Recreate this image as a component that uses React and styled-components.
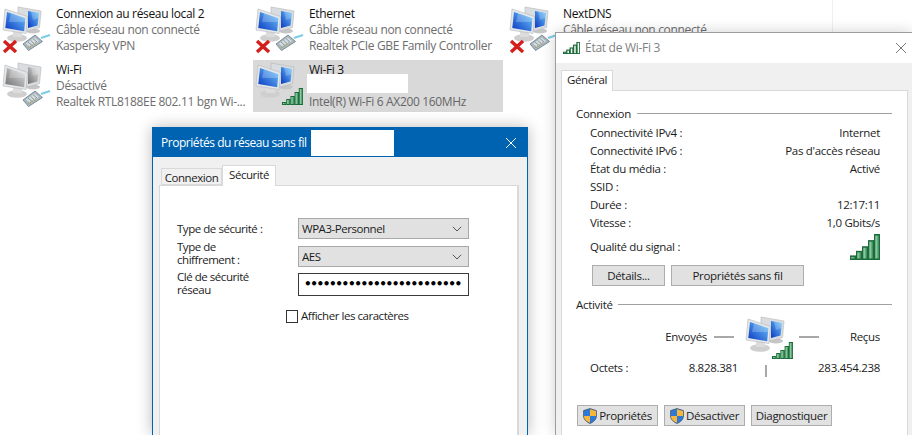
import React from 'react';
import styled, { createGlobalStyle } from 'styled-components';

const Global = createGlobalStyle`
  html, body { margin: 0; padding: 0; background: #fff; overflow: hidden; }
  * { box-sizing: border-box; }
`;

const Screen = styled.div`
  position: relative;
  width: 912px;
  height: 435px;
  overflow: hidden;
  background: #fff;
  font-family: "Open Sans", "Noto Sans", sans-serif;
  font-size: 12px;
  line-height: 16px;
  letter-spacing: -0.33px;
  color: #1c1c1c;
`;

/* ---------- adapter list ---------- */
const List = styled.div`
  display: grid;
  grid-template-columns: 253px 254px 1fr;
  grid-auto-rows: 52px;
  row-gap: 4px;
  width: 833px;
  height: 115px;
  padding-top: 4px;
  border-right: 1px solid #f0f0f0;
`;
const Item = styled.div`
  display: flex;
  width: 250px;
  background: ${p => (p.$selected ? '#d9d9d9' : 'transparent')};
`;
const ItemText = styled.div`
  position: relative;
  padding: 2px 0 0 4px;
  white-space: nowrap;
`;
const ItemName = styled.div`color: #111;`;
const ItemSub = styled.div`color: ${p => (p.$dark ? '#666' : '#6d6d6d')};`;
const Redact = styled.div`
  position: absolute;
  left: ${p => p.$left}px;
  top: ${p => p.$top}px;
  width: ${p => p.$w}px;
  height: ${p => p.$h}px;
  background: #fff;
`;

/* ---------- shared window parts ---------- */
const Win = styled.section`
  position: absolute;
  left: ${p => p.$left}px;
  top: ${p => p.$top}px;
  width: ${p => p.$w}px;
  height: ${p => p.$h}px;
  display: flex;
  flex-direction: column;
  background: #f0f0f0;
`;
const TabRow = styled.div`
  display: flex;
  align-items: flex-end;
  padding-left: ${p => p.$pad}px;
  position: relative;
  z-index: 1;
`;
const Tab = styled.div`
  width: ${p => p.$w}px;
  height: ${p => (p.$active ? 21 : 17)}px;
  margin-bottom: ${p => (p.$active ? -1 : 0)}px;
  border: 1px solid #d9d9d9;
  border-bottom: ${p => (p.$active ? 'none' : '1px solid #d9d9d9')};
  background: ${p => (p.$active ? '#fff' : '#f0f0f0')};
  text-align: center;
  line-height: ${p => (p.$active ? 18 : 17)}px;
`;
const Button = styled.button`
  display: flex;
  align-items: center;
  justify-content: center;
  gap: 2px;
  width: ${p => p.$w}px;
  height: 21px;
  padding: 0;
  background: #e1e1e1;
  border: 1px solid #adadad;
  font: inherit;
  letter-spacing: inherit;
  color: inherit;
`;

/* ---------- status window ---------- */
const StatusWin = styled(Win)`
  border-left: 1px solid #9c9c9c;
  border-top: 1px solid #9c9c9c;
  box-shadow: 0 0 14px rgba(0, 0, 0, 0.18);
  z-index: 3;
  font-size: 11.5px;
  letter-spacing: -0.3px;
`;
const StatusTitle = styled.header`
  flex: none;
  display: flex;
  align-items: center;
  height: 30px;
  padding: 0 5px 0 7px;
  background: #fff;
  color: #7f7f7f;
  gap: 5px;
  font-size: 12px;
  letter-spacing: -0.28px;
`;
const TitleGrow = styled.span`flex: 1;`;
const StatusBody = styled.div`
  flex: 1;
  min-height: 0;
  display: flex;
  flex-direction: column;
  padding: 7px 4px 0 5px;
`;
const StatusPanel = styled.div`
  flex: 1;
  background: #fff;
  border: 1px solid #d9d9d9;
  border-bottom: none;
  padding: 15px 15px 0 14px;
`;
const Heading = styled.div`
  display: flex;
  align-items: center;
  height: 16px;
  margin-top: ${p => p.$mt || 0}px;
`;
const HeadingLabel = styled.span`
  flex: none;
  width: ${p => p.$w}px;
`;
const HeadingRule = styled.span`
  flex: 1;
  height: 1px;
  margin-top: -2px;
  background: #a0a0a0;
`;
const InfoRows = styled.div`
  margin-top: 2px;
  padding: 0 12px 0 14px;
`;
const InfoRow = styled.div`
  display: flex;
  justify-content: space-between;
  align-items: center;
  height: ${p => p.$h || 18}px;
`;
const ButtonRow = styled.div`
  display: flex;
  gap: ${p => p.$gap}px;
  margin: ${p => p.$mt}px 0 0 ${p => p.$ml}px;
`;
const TrafficRow = styled.div`
  display: grid;
  grid-template-columns: 138px 20px 65px 20px 61px;
  align-items: center;
  height: 47px;
`;
const TrafficLabel = styled.span`
  text-align: right;
  padding-right: ${p => p.$pr || 0}px;
  margin-bottom: 3px;
`;
const Dash = styled.span`
  height: 2px;
  margin-bottom: 4px;
  background: #a8a8a8;
`;
const TrafficIcon = styled.div`
  padding-left: 9px;
  align-self: start;
  margin-top: 1px;
`;
const OctetRow = styled.div`
  display: grid;
  grid-template-columns: 60px 88px 27px 2px 113px;
  height: 17px;
  padding-left: 14px;
`;
const Right = styled.span`text-align: right;`;
const Tick = styled.span`
  grid-column: 4;
  align-self: end;
  height: 12px;
  background: #a8a8a8;
`;

/* ---------- properties dialog ---------- */
const DialogWin = styled(Win)`
  border: 1px solid #0063b1;
  border-bottom: none;
  box-shadow: 0 0 14px rgba(0, 0, 0, 0.28);
  z-index: 2;
  font-size: 11.5px;
  letter-spacing: -0.46px;
`;
const DialogTitle = styled.header`
  flex: none;
  display: flex;
  align-items: center;
  height: 29px;
  padding: 0 10px 0 8px;
  background: #0063b1;
  color: #fff;
  font-size: 12px;
`;
const DialogName = styled.span`
  width: 83px;
  height: 26px;
  margin-left: 4px;
  background: #fff;
`;
const DialogBody = styled.div`
  flex: 1;
  min-height: 0;
  display: flex;
  flex-direction: column;
  padding: 8px 8px 0 6px;
`;
const DialogPanel = styled.div`
  flex: 1;
  background: #fff;
  border: 2px solid #d9d9d9;
  border-width: 1px 2px 0 1px;
  padding: 32px 0 0 17px;
`;
const FormRow = styled.div`
  display: grid;
  grid-template-columns: 121px 171px;
  align-items: ${p => (p.$top ? 'start' : 'center')};
  height: ${p => p.$h}px;
  margin-top: ${p => p.$mt || 0}px;
  line-height: 13px;
`;
const Control = styled.div`
  display: flex;
  align-items: center;
  justify-content: space-between;
  align-self: end;
  height: 21px;
  padding: 0 6px 0 3px;
  background: #e1e1e1;
  border: 1px solid #a8a8a8;
  line-height: 16px;
`;
const Password = styled.div`
  align-self: end;
  height: 23px;
  padding-left: 5px;
  border: 1.5px solid #3a3a3a;
  background: #fff;
  overflow: hidden;
  white-space: nowrap;
  font-family: "DejaVu Sans", sans-serif;
  font-size: 12px;
  font-weight: 700;
  line-height: 20px;
  letter-spacing: -1.4px;
  color: #000;
`;
const CheckRow = styled.label`
  display: flex;
  align-items: center;
  gap: 3px;
  margin: 12px 0 0 109px;
`;
const CheckBox = styled.span`
  width: 12px;
  height: 13px;
  border: 1px solid #333;
  background: #fff;
`;

/* ---------- icons ---------- */
const Bars = ({ x = 0, y = 0, width = 21, height = 17, thin }) => (
  <svg x={x} y={y} width={width} height={height} viewBox="0 0 21 17" preserveAspectRatio="none">
    <defs>
      <linearGradient id="barFill" x1="0" x2="1" y1="0" y2="0">
        <stop offset="0" stopColor="#d6eedb" />
        <stop offset="0.55" stopColor="#62b17f" />
        <stop offset="1" stopColor="#2f8a52" />
      </linearGradient>
    </defs>
    {[[0, 14], [4.2, 11], [8.4, 8], [12.6, 4], [16.8, 0]].map(([bx, by]) => (
      <rect key={bx} x={bx + 0.5} y={by + 0.5} width="3.4" height={16 - by} fill={thin ? '#fff' : 'url(#barFill)'} stroke="#1c6b3b" strokeWidth={thin ? 1.6 : 1} />
    ))}
  </svg>
);

const NetIcon = ({ off, x, cable, bars, viewH = 52 }) => {
  const top = off ? '#6f6f6f' : '#0a37c0';
  const bot = off ? '#e6e6e6' : '#6fcbff';
  const gid = off ? 'scrOff' : 'scrOn';
  return (
    <svg width="52" height={viewH} viewBox={`0 4 52 ${viewH}`} style={{ flex: 'none' }}>
      <defs>
        <linearGradient id={gid} x1="0" x2="1" y1="1" y2="0">
          <stop offset="0" stopColor={top} />
          <stop offset="1" stopColor={bot} />
        </linearGradient>
      </defs>
      <ellipse cx="33" cy="31" rx="7" ry="2.5" fill="#c6c6c6" />
      <polygon points="18,7 41,11 39.5,27.5 28,31 18,20" fill="#d9dde0" stroke="#b3b6b8" strokeWidth="0.6" />
      <polygon points="28,11 39,13 37.5,25.5 28,28" fill={`url(#${gid})`} />
      <polygon points="31,11.5 39,13 38.5,18 33,20" fill="#fff" opacity="0.22" />
      <ellipse cx="17" cy="38" rx="10" ry="3.8" fill="#cfcfcf" />
      <polygon points="13,30 22,32 22,37 13,37" fill="#dcdcdc" />
      <polygon points="5,9 27.5,16.5 26,33.5 3,30" fill="#e4e7e9" stroke="#b5b8ba" strokeWidth="0.6" />
      <polygon points="7,12 25.3,18.3 24.2,31.2 5.3,28" fill={`url(#${gid})`} />
      <polygon points="11,13.4 25.3,18.3 24.9,22 9,22" fill="#fff" opacity="0.22" />
      {x && (
        <g stroke="#d3201c" strokeWidth="3.4" strokeLinecap="butt">
          <line x1="4" y1="41" x2="16" y2="52" />
          <line x1="16" y1="41" x2="4" y2="52" />
        </g>
      )}
      {cable && (
        <g>
          <line x1="41" y1="38" x2="50" y2="35" stroke="#7ccbe8" strokeWidth="2" />
          <polygon points="23,44 35,35 42.5,41.5 28.5,50.5" fill="#a9b8bf" stroke="#687a84" strokeWidth="0.8" />
          <polygon points="26,43.5 34.5,37.5 39,41 30,47" fill="#d5dfe3" />
          <g stroke="#72838c" strokeWidth="0.8">
            <line x1="28" y1="42" x2="32" y2="45.5" />
            <line x1="30.5" y1="40.3" x2="34.5" y2="43.8" />
            <line x1="33" y1="38.6" x2="37" y2="42" />
          </g>
          <line x1="28.5" y1="47.5" x2="37" y2="42" stroke="#a68a3c" strokeWidth="1.1" strokeDasharray="1 1" />
        </g>
      )}
      {bars && <Bars x={29} y={32} />}
    </svg>
  );
};

const Shield = () => (
  <svg width="14" height="16" viewBox="0 0 14 16">
    <path d="M7 .6 13.4 2.6V8c0 3.6-3 6.2-6.4 7.4C3.6 14.2.6 11.6.6 8V2.6Z" fill="#2f6fc4" stroke="#44546a" strokeWidth="0.8" />
    <path d="M7 1.2V8H1c0 3.2 2.6 5.6 6 6.8V8h6V3Z" fill="#f6b73c" />
    <path d="M7 1.2 1 3V8h6Z" fill="#2f79d6" />
    <path d="M7 8h6c0 3.2-2.6 5.6-6 6.8Z" fill="#2f79d6" />
  </svg>
);

const Chevron = () => (
  <svg width="10" height="6" viewBox="0 0 10 6">
    <path d="M.8.8 5 5 9.2.8" fill="none" stroke="#555" strokeWidth="1" />
  </svg>
);

const Close = ({ color }) => (
  <svg width="12" height="12" viewBox="0 0 12 12">
    <path d="M1 1 11 11M11 1 1 11" stroke={color} strokeWidth="1" />
  </svg>
);

const info = [
  ['Connectivité IPv4 :', 'Internet'],
  ['Connectivité IPv6 :', "Pas d'accès réseau"],
  ['État du média :', 'Activé'],
  ['SSID :', ''],
  ['Durée :', '12:17:11'],
  ['Vitesse :', '1,0 Gbits/s'],
];

export default function App() {
  return (
    <Screen>
      <Global />
      <List>
        <Item>
          <NetIcon x cable />
          <ItemText>
            <ItemName>Connexion au réseau local 2</ItemName>
            <ItemSub>Câble réseau non connecté</ItemSub>
            <ItemSub>Kaspersky VPN</ItemSub>
          </ItemText>
        </Item>
        <Item>
          <NetIcon x cable />
          <ItemText>
            <ItemName>Ethernet</ItemName>
            <ItemSub>Câble réseau non connecté</ItemSub>
            <ItemSub>Realtek PCIe GBE Family Controller</ItemSub>
          </ItemText>
        </Item>
        <Item>
          <NetIcon x cable />
          <ItemText>
            <ItemName>NextDNS</ItemName>
            <ItemSub>Câble réseau non connecté</ItemSub>
          </ItemText>
        </Item>
        <Item>
          <NetIcon off cable />
          <ItemText>
            <ItemName>Wi-Fi</ItemName>
            <ItemSub>Désactivé</ItemSub>
            <ItemSub>Realtek RTL8188EE 802.11 bgn Wi-...</ItemSub>
          </ItemText>
        </Item>
        <Item $selected>
          <NetIcon bars />
          <ItemText>
            <ItemName>Wi-Fi 3</ItemName>
            <Redact $left={2} $top={14} $w={101} $h={19} />
            <ItemSub>&nbsp;</ItemSub>
            <ItemSub $dark>Intel(R) Wi-Fi 6 AX200 160MHz</ItemSub>
          </ItemText>
        </Item>
      </List>

      <DialogWin $left={152} $top={127} $w={376} $h={308}>
        <DialogTitle>
          Propriétés du réseau sans fil
          <DialogName />
          <TitleGrow />
          <Close color="#fff" />
        </DialogTitle>
        <DialogBody>
          <TabRow $pad={2}>
            <Tab $w={61}>Connexion</Tab>
            <Tab $w={54} $active>Sécurité</Tab>
          </TabRow>
          <DialogPanel>
            <FormRow $h={21}>
              <span>Type de sécurité :</span>
              <Control>WPA3-Personnel<Chevron /></Control>
            </FormRow>
            <FormRow $h={27} $mt={1} $top>
              <span>Type de<br />chiffrement :</span>
              <Control>AES<Chevron /></Control>
            </FormRow>
            <FormRow $h={26} $mt={3} $top>
              <span>Clé de sécurité<br />réseau</span>
              <Password>•••••••••••••••••••••••••</Password>
            </FormRow>
            <CheckRow>
              <CheckBox />
              Afficher les caractères
            </CheckRow>
          </DialogPanel>
        </DialogBody>
      </DialogWin>

      <StatusWin $left={555} $top={32} $w={357} $h={403}>
        <StatusTitle>
          <Bars width={17} height={12} thin />
          État de Wi-Fi 3
          <TitleGrow />
          <Close color="#777" />
        </StatusTitle>
        <StatusBody>
          <TabRow $pad={0}>
            <Tab $w={52} $active>Général</Tab>
          </TabRow>
          <StatusPanel>
            <Heading><HeadingLabel $w={61}>Connexion</HeadingLabel><HeadingRule /></Heading>
            <InfoRows>
              {info.map(([k, v]) => (
                <InfoRow key={k}><span>{k}</span><span>{v}</span></InfoRow>
              ))}
              <InfoRow $h={30}>
                <span>Qualité du signal :</span>
                <Bars width={30} height={26} />
              </InfoRow>
            </InfoRows>
            <ButtonRow $gap={6} $mt={3} $ml={16}>
              <Button $w={73}>Détails...</Button>
              <Button $w={133}>Propriétés sans fil</Button>
            </ButtonRow>
            <Heading $mt={11}><HeadingLabel $w={42}>Activité</HeadingLabel><HeadingRule /></Heading>
            <TrafficRow>
              <TrafficLabel $pr={7}>Envoyés</TrafficLabel>
              <Dash />
              <TrafficIcon><NetIcon bars viewH={46} /></TrafficIcon>
              <Dash />
              <TrafficLabel>Reçus</TrafficLabel>
            </TrafficRow>
            <OctetRow>
              <span>Octets :</span>
              <Right>8.828.381</Right>
              <Tick />
              <Right>283.454.238</Right>
            </OctetRow>
            <ButtonRow $gap={6} $mt={28} $ml={1}>
              <Button $w={81}><Shield />Propriétés</Button>
              <Button $w={81}><Shield />Désactiver</Button>
              <Button $w={81}>Diagnostiquer</Button>
            </ButtonRow>
          </StatusPanel>
        </StatusBody>
      </StatusWin>
    </Screen>
  );
}
